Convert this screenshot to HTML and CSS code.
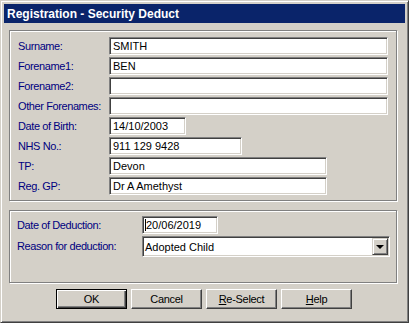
FILE: index.html
```html
<!DOCTYPE html>
<html lang="en">
<head>
  <meta charset="UTF-8" />
  <title>Registration - Security Deduct</title>
  <link rel="stylesheet" href="styles.css">
</head>
<body>
  <div class="window">
    <div class="titlebar">Registration - Security Deduct</div>
    <div class="content">
      <div class="group group-patient">
        <label class="lbl">Surname:</label>
        <div class="field w-full">SMITH</div>
        <label class="lbl">Forename1:</label>
        <div class="field w-full">BEN</div>
        <label class="lbl">Forename2:</label>
        <div class="field w-full"></div>
        <label class="lbl">Other Forenames:</label>
        <div class="field w-full"></div>
        <label class="lbl">Date of Birth:</label>
        <div class="field w-dob">14/10/2003</div>
        <label class="lbl">NHS No.:</label>
        <div class="field w-nhs">911 129 9428</div>
        <label class="lbl">TP:</label>
        <div class="field w-mid">Devon</div>
        <label class="lbl">Reg. GP:</label>
        <div class="field w-mid">Dr A Amethyst</div>
      </div>

      <div class="group group-deduction">
        <label class="lbl">Date of Deduction:</label>
        <div class="field w-date"><span class="caret"></span>20/06/2019</div>
        <label class="lbl lbl-tall">Reason for deduction:</label>
        <div class="combo">
          <span class="combo-text">Adopted Child</span>
          <span class="combo-btn"><span class="arrow"></span></span>
        </div>
      </div>

      <div class="buttons">
        <button type="button" class="btn btn-default">OK</button>
        <button type="button" class="btn">Cancel</button>
        <button type="button" class="btn"><u>R</u>e-Select</button>
        <button type="button" class="btn"><u>H</u>elp</button>
      </div>
    </div>
  </div>
</body>
</html>
```

FILE: styles.css
```css
body {
  margin: 0;
  background: #000;
  font-family: "Liberation Sans", Arial, sans-serif;
  font-size: 11px;
}
.window {
  width: 409px;
  height: 323px;
  box-sizing: border-box;
  background: #d4d0c8;
  border: 1px solid;
  border-color: #d4d0c8 #404040 #404040 #d4d0c8;
  box-shadow: inset 1px 1px 0 #fff, inset -1px -1px 0 #808080;
  padding: 3px;
}
.titlebar {
  height: 19px;
  background: #0a246a;
  color: #fff;
  font-weight: bold;
  font-size: 12px;
  display: flex;
  align-items: center;
  padding-left: 3px;
}
.content {
  padding: 7px 8px 0 5px;
}
.group {
  border: 1px solid #808080;
  box-shadow: inset 1px 1px 0 #fff, 1px 1px 0 #fff;
  display: grid;
  align-content: start;
  justify-items: start;
  row-gap: 2px;
}
.group-patient {
  height: 171px;
  box-sizing: border-box;
  padding: 6px 0 0 8px;
  grid-template-columns: 91px 1fr;
  grid-auto-rows: 18px;
}
.group-deduction {
  margin-top: 9px;
  height: 73px;
  box-sizing: border-box;
  padding: 5px 0 0 7px;
  grid-template-columns: 125px 1fr;
}
.lbl {
  color: #000080;
  line-height: 18px;
  letter-spacing: -0.4px;
  white-space: nowrap;
}
.lbl-tall {
  line-height: 21px;
}
.field {
  height: 18px;
  box-sizing: border-box;
  background: #fff;
  border: 1px solid;
  border-color: #808080 #fff #fff #808080;
  box-shadow: inset 1px 1px 0 #404040, inset -1px -1px 0 #d4d0c8;
  padding-left: 3px;
  line-height: 16px;
  color: #000;
  white-space: nowrap;
  display: flex;
  align-items: center;
}
.w-full { width: 279px; }
.w-dob { width: 77px; }
.w-nhs { width: 133px; }
.w-mid { width: 218px; }
.w-date { width: 76px; padding-left: 2px; }
.caret {
  width: 1px;
  height: 12px;
  background: #000;
  margin-right: 0;
}
.combo {
  width: 248px;
  height: 21px;
  box-sizing: border-box;
  background: #fff;
  border: 1px solid;
  border-color: #808080 #fff #fff #808080;
  box-shadow: inset 1px 1px 0 #404040, inset -1px -1px 0 #d4d0c8;
  padding: 1px 1px 1px 2px;
  display: flex;
  align-items: center;
}
.combo-text {
  flex: 1;
  color: #000;
}
.combo-btn {
  width: 16px;
  height: 17px;
  box-sizing: border-box;
  background: #d4d0c8;
  border: 1px solid;
  border-color: #d4d0c8 #404040 #404040 #d4d0c8;
  box-shadow: inset 1px 1px 0 #fff, inset -1px -1px 0 #808080;
  display: flex;
  align-items: center;
  justify-content: center;
}
.arrow {
  width: 0;
  height: 0;
  border-left: 4px solid transparent;
  border-right: 4px solid transparent;
  border-top: 4px solid #000;
  margin-top: 1px;
}
.buttons {
  display: flex;
  gap: 4px;
  margin-top: 6px;
  padding-left: 47px;
}
.btn {
  width: 71px;
  height: 20px;
  box-sizing: border-box;
  background: #d4d0c8;
  border: 1px solid;
  border-color: #fff #404040 #404040 #fff;
  box-shadow: inset -1px -1px 0 #808080;
  font-family: "Liberation Sans", Arial, sans-serif;
  font-size: 11px;
  letter-spacing: -0.3px;
  color: #000;
  padding: 0;
  cursor: pointer;
}
.btn-default {
  border-color: #000;
  box-shadow: inset 1px 1px 0 #fff, inset -1px -1px 0 #404040, inset -2px -2px 0 #808080;
}
```
